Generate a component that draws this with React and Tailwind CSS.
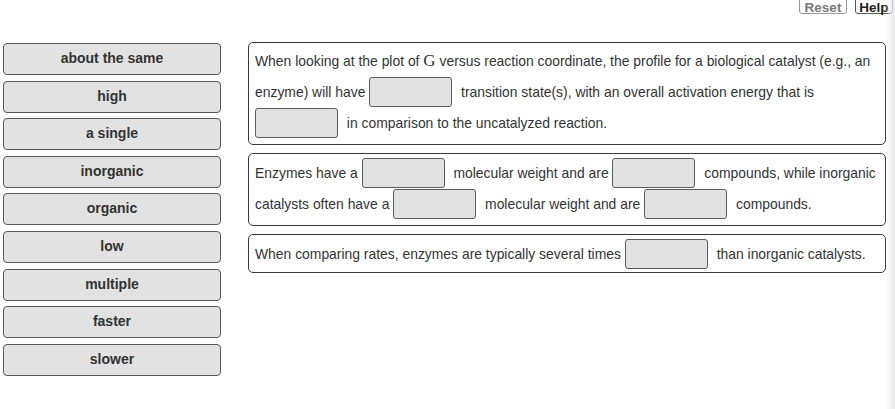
const choices = [
  "about the same",
  "high",
  "a single",
  "inorganic",
  "organic",
  "low",
  "multiple",
  "faster",
  "slower",
];

function Blank() {
  return (
    <span className="inline-block h-[30px] w-[83px] align-top rounded-[3px] border-[1.5px] border-[#5c5c5c] bg-[#e2e2e2] mr-[5px]" />
  );
}

function Panel({ children, className = "" }) {
  return (
    <div
      className={
        "rounded-[5px] border-[1.5px] border-[#3a3a3a] bg-white px-[6px] leading-[31px] " +
        className
      }
    >
      {children}
    </div>
  );
}

export default function App() {
  return (
    <div
      className="relative h-[409px] w-[895px] overflow-hidden bg-white text-[13.9px] text-[#333]"
      style={{ fontFamily: '"Liberation Sans", Arial, sans-serif' }}
    >
      <div className="flex justify-end gap-[8px] pr-[2px] mt-[-6px]">
        <button className="h-[20px] w-[48px] rounded-[3px] border border-[#9a9a9a] bg-white pt-[3px] text-[13.5px] font-bold text-[#7a7a7a]">
          Reset
        </button>
        <button className="h-[20px] w-[38px] rounded-[3px] border border-[#555] bg-white pt-[3px] text-[13.5px] font-bold text-[#222]">
          Help
        </button>
      </div>

      <div className="flex mt-[28px]">
        <div className="ml-[3px] mt-[1px] flex w-[218px] flex-col gap-[5.6px]">
          {choices.map((c) => (
            <div
              key={c}
              className="flex h-[32px] items-center justify-center rounded-[4px] border-[1.5px] border-[#5a5a5a] bg-[#e2e2e2] pb-[1px] text-[14px] font-bold text-[#333]"
            >
              {c}
            </div>
          ))}
        </div>

        <div className="ml-[27px] flex w-[638px] flex-col gap-[8px]">
          <Panel className="pt-[1.5px] pb-[5.5px]">
            When looking at the plot of{" "}
            <span
              className="text-[17px]"
              style={{ fontFamily: '"Liberation Serif", serif' }}
            >
              G
            </span>{" "}
            versus reaction coordinate, the profile for a biological catalyst
            (e.g., an enzyme) will have <Blank /> transition state(s), with an
            overall activation energy that is <Blank /> in comparison to the
            uncatalyzed reaction.
          </Panel>
          <Panel className="pt-[4px] pb-[5px]">
            Enzymes have a <Blank /> molecular weight and are <Blank />{" "}
            compounds, while inorganic catalysts often have a <Blank />{" "}
            molecular weight and are <Blank /> compounds.
          </Panel>
          <Panel className="pt-[3.5px] pb-[2px]">
            When comparing rates, enzymes are typically several times{" "}
            <Blank /> than inorganic catalysts.
          </Panel>
        </div>
      </div>

      <div className="pointer-events-none absolute right-0 top-0 h-full w-[10px] bg-gradient-to-r from-transparent to-[#ebebeb]" />
    </div>
  );
}
